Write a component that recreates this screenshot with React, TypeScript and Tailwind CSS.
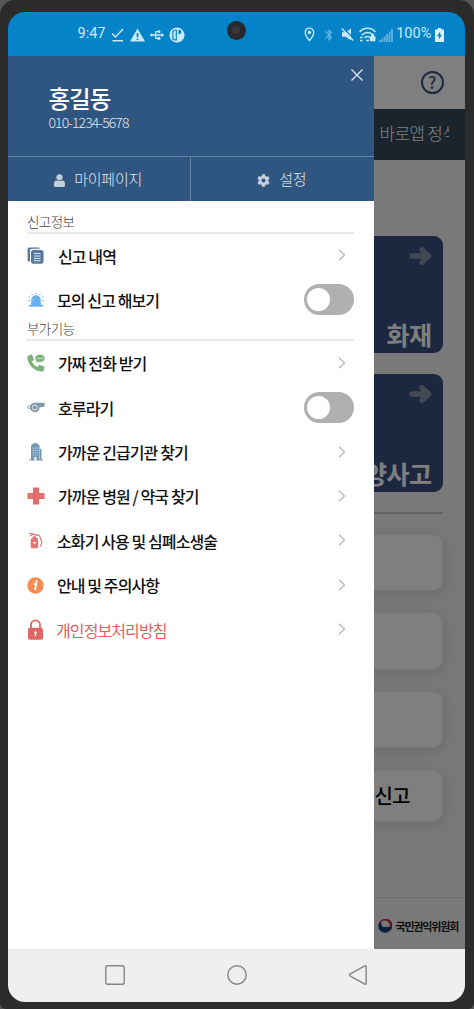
import React, { useState } from 'react';
import { FaCog } from 'react-icons/fa';
import { MdBluetooth, MdOutlineLocationOn, MdUsb } from 'react-icons/md';

const FONT = "font-['Noto_Sans_CJK_KR','Noto_Sans',sans-serif]";

/* ---------- status bar ---------- */

function StatusBar() {
  return (
    <div className="relative h-11 shrink-0 bg-[#0483c8] text-[#cde8f7] flex items-center justify-between pl-[70px] pr-[20.5px] pt-px font-[Roboto,sans-serif]">
      <div className="flex items-center">
        <span className="w-[28px] text-[14.5px] leading-none">9:47</span>
        <svg className="ml-[5px] w-[13px] h-[14px]" viewBox="0 0 13 14" fill="none" stroke="currentColor" strokeWidth="1.5">
          <path d="M1 5.5 4.5 9 12 1M1.5 12.8h10.5" />
        </svg>
        <svg className="ml-[6px] w-[15px] h-[14px]" viewBox="0 0 15 14">
          <path d="M7.5.5 15 13.500H0z" fill="currentColor" />
          <path d="M7.500 5v4.300M7.500 10.400v1.700" stroke="#0483c8" strokeWidth="1.700" />
        </svg>
        <MdUsb className="ml-[4px] size-[16px] rotate-90" />
        <svg className="ml-[4px] size-[16px]" viewBox="0 0 16 16">
          <circle cx="8" cy="8" r="7.6" fill="currentColor" />
          <path d="M7.300 3H6a2.200 2.200 0 0 0-2.200 2.200v5.600A2 2 0 0 0 6 12.800h1.300z" fill="none" stroke="#0483c8" strokeWidth="1.200" />
          <path d="M9.500 2.800h.8a2.100 2.100 0 0 1 0 4.200h-.8z" fill="#0483c8" />
        </svg>
      </div>

      {/* Camera */}
      <div className="absolute left-[219.500px] top-[9px] size-[18.500px] rounded-full bg-[#272a2c] flex items-center justify-center">
        <div className="size-[8px] rounded-full bg-[#3a3a3a]" />
      </div>

      <div className="flex items-center">
        <MdOutlineLocationOn className="size-[17px]" />
        <MdBluetooth className="ml-[4px] size-[14px] opacity-50" />
        <svg className="ml-[5px] size-[13px]" viewBox="0 0 13 13">
          <path d="M1 4.300h3.500L10 .5v11.700L4.500 8.700H1z" fill="currentColor" />
          <path d="M2-.3 13 11" stroke="#0483c8" strokeWidth="1.300" />
          <path d="M.8.600 12.300 12.500" stroke="currentColor" strokeWidth="1.400" />
        </svg>
        <svg className="ml-[5px] w-[17px] h-[15px]" viewBox="0 0 17 15" fill="none" stroke="currentColor" strokeWidth="1.600">
          <path d="M.6 5C4.800 0 12.200 0 16.400 5M3 8.200c3-3.600 8-3.600 11 0M5.500 11c1.700-2 4.300-2 6 0" />
          <path d="M1 10.500h2.500M1 13.500h2.500M7 13.500h3" />
          <path d="M11 9.500h5.500v4.800H11zM12.200 9.500V8a1.500 1.500 0 0 1 3 0v1.500z" fill="currentColor" stroke="none" />
        </svg>
        <svg className="ml-[3px] w-[14px] h-[14px] opacity-50" viewBox="0 0 14 14" stroke="currentColor" strokeWidth="1.700">
          <path d="M.8 14v-2M3.200 14v-3.500M5.600 14V8.500M8 14V6M10.500 14V3.500M13 14V1" />
        </svg>
        <span className="ml-[3.500px] w-[35px] text-[14.5px] leading-none">100%</span>
        <svg className="ml-[4px] w-[9px] h-[14px]" viewBox="0 0 9 14">
          <path d="M2.700 0h3.600v1.400H9V14H0V1.400h2.700z" fill="#e0f1fa" />
          <path d="M5.200 3.500 2 8.200h2v3.200l3-4.700H5.200z" fill="#0483c8" />
        </svg>
      </div>
    </div>
  );
}

/* ---------- menu icons ---------- */

const DocsIcon = () => (
  <svg className="size-[17px]" viewBox="0 0 17 17">
    <path d="M1.500 14.500A1.500 1.500 0 0 1 .6 13V2.200C.6 1 1.300.5 2.300.5H11c1 0 1.700.5 1.700 1.300H5C3.500 1.800 3 2.500 3 3.800v10.700z" fill="#5878a0" />
    <rect x="4" y="3" width="12.500" height="13.800" rx="2.200" fill="#5878a0" />
    <path d="M7 6.500h6.500M7 9h6.500M7 11.400h6.500M7 13.700h6.500" stroke="#dfe7f0" strokeWidth="1" />
  </svg>
);

const SirenIcon = () => (
  <svg className="w-[16px] h-[14px]" viewBox="0 0 16 14">
    <path d="M3.200 12V7.100a4.800 4.800 0 0 1 9.600 0V12z" fill="#67aeee" />
    <path d="M1 11.800h14v1.900H1z" fill="#67aeee" />
    <path d="M8 0v1.700M3.700.8l.8 1.300M12.300.8l-.8 1.300M.6 3.700l1.500.8M15.400 3.700l-1.500.8M0 7.500h1.800M16 7.500h-1.800" stroke="#67aeee" strokeWidth="1" />
    <path d="M5 9.500V7.200c0-1 .5-1.900 1.500-2.400" stroke="#a9d2f7" strokeWidth=".7" fill="none" />
  </svg>
);

const CallIcon = () => (
  <svg className="size-[18px]" viewBox="0 0 18 18">
    <path d="M1 1.800 3.800.6c.6-.2 1.200 0 1.400.6l1.600 3.700c.2.600 0 1.100-.4 1.500L5 7.600c1 2.400 2.900 4.300 5.300 5.300l1.300-1.500c.4-.4.900-.6 1.500-.4l3.700 1.600c.6.200.8.800.7 1.400l-.8 2.700c-.2.600-.7.900-1.300.9C7.400 17.600.4 10.700.4 3c0-.5.200-1 .6-1.200z" fill="#7eb27c" />
    <path d="M13 .4c2.700 0 4.700 1.700 4.700 3.900S15.700 8.200 13 8.200c-.8 0-1.500-.1-2.100-.4l-2 .7.600-1.800a3.600 3.600 0 0 1-1.200-2.400C8.300 2.100 10.400.4 13 .4z" fill="#7eb27c" />
    <path d="M10.300 3.800h1.300v1.200h-1.300zM12.400 3.800h1.300v1.200h-1.300zM14.500 3.800h1.300v1.200h-1.300z" fill="#e4f0e3" />
  </svg>
);

const WhistleIcon = () => (
  <svg className="w-[18px] h-[11px]" viewBox="0 0 18 11">
    <path d="M8 .8h9.600v3.700l-5 .9c-.2 2.800-2.200 4.800-4.800 4.800A4.700 4.700 0 0 1 3 5.500C3 2.800 5.200.8 8 .8z" fill="#8098a8" />
    <circle cx="7.800" cy="5.500" r="2.500" fill="none" stroke="#e5ebef" strokeWidth="1" />
    <path d="M3.800 4.200C2 3.500.6 4 .6 5.100s1.200 1.600 3 1.200" fill="none" stroke="#8098a8" strokeWidth="1" />
  </svg>
);

const BuildingIcon = () => (
  <svg className="w-[14px] h-[18px]" viewBox="0 0 14 18">
    <path d="M2 16.500V2.300L4 1V.3h4.500V1l2 1.300v3.200l2 1v10h1.500v1H.2v-1z" fill="#7295b2" />
    <path d="M4.300 4.500v8M6.300 4.500v8M8.300 4.500v8" stroke="#eef3f7" strokeWidth=".9" strokeDasharray="1.100 1.300" />
    <path d="M5.300 14h2.200v3.500H5.300zM10.200 5.500h.5v11h-.5z" fill="#eef3f7" />
  </svg>
);

const CrossIcon = () => (
  <svg className="size-[18px]" viewBox="0 0 18 18">
    <path d="M6.500.5h5c.4 0 .6.200.6.600v4.800h4.800c.4 0 .6.200.6.600v5c0 .4-.2.600-.6.600h-4.800v4.800c0 .4-.2.600-.6.600h-5c-.4 0-.6-.2-.6-.6v-4.800H1.100c-.4 0-.6-.2-.6-.6v-5c0-.4.200-.6.600-.6h4.800V1.100c0-.4.200-.6.600-.6z" fill="#e46e6e" />
  </svg>
);

const ExtinguisherIcon = () => (
  <svg className="w-[14px] h-[17px]" viewBox="0 0 14 17">
    <path d="M1.800 15.300V8.200c0-1.400.8-2.200 2-2.500V4.300h3.400v1.400c1.200.3 2 1.100 2 2.500v7.100c0 .5-.3.900-.9.900H2.700c-.6 0-.9-.4-.9-.9z" fill="#e57373" />
    <path d="M.3 1.200 8 3.300M1 4l4-2.300M6.500 3.700C9.500 2 11 3.500 11.300 6c.2 2 1.800 3.200 1.500 5.200-.2 1.400-.8 2.300-1.800 3.200" fill="none" stroke="#e57373" strokeWidth="1.200" />
    <path d="M5.500 12.300c-2-1.300-1.800-3 0-2.400 1.800-.6 2 1.100 0 2.400z" fill="#fbe3e3" />
  </svg>
);

const InfoIcon = () => (
  <svg className="size-[17px]" viewBox="0 0 17 17">
    <circle cx="8.500" cy="8.500" r="8.200" fill="#f68b54" />
    <circle cx="9.500" cy="4.500" r="1.200" fill="#fff" />
    <path d="M6.800 7.200h2.500l-1.200 4.700c-.1.500.4.500 1.200.2" fill="none" stroke="#fff" strokeWidth="1.700" />
  </svg>
);

const LockIcon = () => (
  <svg className="w-[15px] h-[21px]" viewBox="0 0 15 21">
    <path d="M3 10V5.800a4.500 4.500 0 0 1 9 0V10" fill="none" stroke="#e06666" strokeWidth="1.800" />
    <rect x="0" y="8.800" width="15" height="11.900" rx="1.800" fill="#e06666" />
    <path d="M7.500 12.200a1.300 1.300 0 0 1 .7 2.400v2.300H6.800v-2.300a1.300 1.300 0 0 1 .7-2.400z" fill="#fff" />
  </svg>
);

/* ---------- drawer ---------- */

interface MenuItem {
  label: string;
  icon: React.ReactNode;
  toggle?: boolean;
  className?: string;
}

const reportItems: MenuItem[] = [
  { label: '신고 내역', icon: <DocsIcon /> },
  { label: '모의 신고 해보기', icon: <SirenIcon />, toggle: true, className: '-ml-px' },
];

const extraItems: MenuItem[] = [
  { label: '가짜 전화 받기', icon: <CallIcon /> },
  { label: '호루라기', icon: <WhistleIcon />, toggle: true },
  { label: '가까운 긴급기관 찾기', icon: <BuildingIcon /> },
  { label: '가까운 병원 / 약국 찾기', icon: <CrossIcon /> },
  { label: '소화기 사용 및 심폐소생술', icon: <ExtinguisherIcon />, className: '-ml-px' },
  { label: '안내 및 주의사항', icon: <InfoIcon />, className: '-ml-px' },
  { label: '개인정보처리방침', icon: <LockIcon />, className: '-ml-[2px] text-[#e06060] font-normal' },
];

function Toggle() {
  const [on, setOn] = useState(false);
  return (
    <button
      onClick={() => setOn(!on)}
      className={`w-[50px] h-[31px] rounded-full px-[3px] flex items-center ${on ? 'bg-[#2f5680] justify-end' : 'bg-[#b0b0b0]'}`}
    >
      <span className="size-[23px] rounded-full bg-white" />
    </button>
  );
}

function MenuRow({ item }: { item: MenuItem }) {
  return (
    <div className="h-[44.4px] flex items-center">
      <div className="w-[17px] mr-[14px] flex justify-center shrink-0">
        <div className="shrink-0">{item.icon}</div>
      </div>
      <span className={`text-[16px] leading-none tracking-[-0.900px] whitespace-nowrap ${item.className?.includes('text-') ? '' : 'text-[#111] font-medium'} ${item.className ?? ''}`}>
        {item.label}
      </span>
      <div className="ml-auto pb-px">
        {item.toggle ? (
          <Toggle />
        ) : (
          <svg className="w-[8px] h-[12px] mr-[8px]" viewBox="0 0 8 12" fill="none" stroke="#b8b8b8" strokeWidth="1.300">
            <path d="M1 .8 6.500 6 1 11.200" />
          </svg>
        )}
      </div>
    </div>
  );
}

function SectionLabel({ children }: { children: React.ReactNode }) {
  return (
    <div className="h-[22px] border-b-2 border-[#e8e8e8] text-[13.5px] leading-[18px] tracking-[-0.600px] font-light text-[#444]">
      {children}
    </div>
  );
}

function Drawer() {
  return (
    <div className="absolute left-0 inset-y-0 w-[366.500px] bg-white flex flex-col">
      <div className="bg-[#2f5680] text-white">
        <div className="h-[100px] pl-[41px] pr-[11px] flex justify-between">
          <div className="pt-[30px]">
            <div className="text-[23.5px] leading-[24px] tracking-[-1px] font-medium">홍길동</div>
            <div className="mt-[3px] text-[14px] leading-[18px] tracking-[-0.900px] font-light text-[#e2e8ef]">010-1234-5678</div>
          </div>
          <svg className="mt-[13px] size-[12px]" viewBox="0 0 12 12" stroke="#dfe6ee" strokeWidth="1.300">
            <path d="m.5.5 11 11M11.500.5l-11 11" />
          </svg>
        </div>
        <div className="h-[45.300px] grid grid-cols-2 border-t border-[#6582a2] text-[15px] tracking-[-0.250px] font-light text-[#e2e8ef]">
          <div className="pr-[1px] flex items-center justify-center border-r border-[#6582a2]">
            <svg className="w-[11px] h-[13px] mr-[9px] mt-[3px]" viewBox="0 0 11 13" fill="#c3cfdd">
              <circle cx="5.500" cy="3.300" r="3.100" />
              <path d="M2.300 6.200c1.800 1.200 4.600 1.200 6.400 0 1.500.5 2.300 1.700 2.300 3.500v1.800c0 .9-.5 1.500-1.500 1.500h-8C.5 13 0 12.400 0 11.500V9.700c0-1.800.8-3 2.300-3.500z" />
            </svg>
            마이페이지
          </div>
          <div className="pr-[1px] flex items-center justify-center">
            <FaCog className="size-[13px] mr-[9px] mt-[3px] text-[#c3cfdd]" />
            설정
          </div>
        </div>
      </div>

      <div className="pl-[19.500px] pr-[20px] pt-[10.500px]">
        <SectionLabel>신고정보</SectionLabel>
        {reportItems.map(item => (
          <MenuRow key={item.label} item={item} />
        ))}
        <div className="-mt-[3.500px]">
          <SectionLabel>부가기능</SectionLabel>
        </div>
        {extraItems.map(item => (
          <MenuRow key={item.label} item={item} />
        ))}
      </div>
    </div>
  );
}

/* ---------- home screen behind the drawer ---------- */

function ReportCard({ title }: { title?: string }) {
  return (
    <div className="h-[117.700px] rounded-[9px] bg-[#3a5180] pt-[10px] pr-[11px] pb-[4px] flex flex-col items-end justify-between">
      <svg className="w-[23px] h-[20px]" viewBox="0 0 23 20" fill="none" stroke="#8792a8" strokeWidth="5.500" strokeLinecap="round" strokeLinejoin="round">
        <path d="M3 10h16M13 3.800 19.500 10 13 16.200" />
      </svg>
      {title && <span className="text-[25px] leading-[30px] tracking-[-0.400px] font-bold text-white">{title}</span>}
    </div>
  );
}

function HomeScreen() {
  return (
    <div className="h-full flex flex-col bg-[#f2f2f2]">
      <div className="h-[52.500px] bg-white flex items-center justify-end pr-[21px]">
        <div className="size-[23px] rounded-full border-2 border-[#3a5180] text-[#3a5180] text-[17px] leading-none font-medium flex items-center justify-center pb-px">
          ?
        </div>
      </div>
      <div className="h-[51.200px] bg-[#344859] pl-[339px] pr-[15.500px] pb-[3px] flex items-center">
        <div className="w-full overflow-hidden whitespace-nowrap text-[17px] leading-[24px] tracking-[-0.700px] font-light text-white">
          <span className="-ml-[2px] mr-[2px]">신고</span> 바로앱 정식
        </div>
      </div>

      <div className="mt-[76px] pl-[15px] pr-[22px] flex flex-col">
        <div className="grid grid-cols-2 gap-x-3 gap-y-[20.500px]">
          <ReportCard />
          <ReportCard title="화재" />
          <ReportCard />
          <ReportCard title="해양사고" />
        </div>
        <div className="mt-[20.500px] h-[2px] bg-[#c4c4c4]" />
        <div className="mt-[19.500px] flex flex-col gap-[21.600px]">
          {[0, 1, 2].map(i => (
            <div key={i} className="h-[57.200px] rounded-[10px] bg-white border border-[#ececec] shadow-[2px_3px_14px_rgba(0,0,0,0.12)]" />
          ))}
          <div className="h-[52.500px] rounded-[10px] bg-white border border-[#ececec] shadow-[2px_3px_14px_rgba(0,0,0,0.12)] flex items-center justify-end pr-[32px] text-[20px] tracking-[-0.800px] font-medium text-black">
            문자 신고
          </div>
        </div>
      </div>

      <div className="mt-auto h-[51.500px] border-t border-[#dcdcdc] flex items-center justify-end gap-[3px] pt-[6px] pr-[6.500px]">
        <svg className="size-[14px]" viewBox="0 0 14 14">
          <circle cx="7" cy="7" r="6.800" fill="#0c4478" />
          <path d="M1.800 3A6.800 6.800 0 1 1 11.500 12.100c1.800-2.500 1.500-5.600-.5-7.100-2.500-1.500-4 0-5 1S2.500 6.500 1.800 3z" fill="#cf2340" />
          <path d="M3.500 2.500C6 .9 9.200 1.500 11 3.800c1 1.500 1.300 3.500 0 4.200-1.300.6-2.300-.6-3.900 0C5 8.800 2.500 6 3.500 2.500z" fill="#f2f2f2" />
        </svg>
        <span className="text-[11px] tracking-[-1.150px] font-bold text-[#222]">국민권익위원회</span>
      </div>
    </div>
  );
}

function NavBar() {
  return (
    <div className="h-[53.500px] shrink-0 bg-[#efefef] pl-[97px] pr-[98px] flex items-center justify-between">
      <svg className="size-[20px]" viewBox="0 0 20 20" fill="none" stroke="#858585" strokeWidth="1.400">
        <rect x=".8" y=".8" width="18.400" height="18.400" rx="1.800" />
      </svg>
      <svg className="size-[20px]" viewBox="0 0 20 20" fill="none" stroke="#858585" strokeWidth="1.400">
        <circle cx="10" cy="10" r="9.200" />
      </svg>
      <svg className="w-[18px] h-[20px]" viewBox="0 0 18 20" fill="none" stroke="#858585" strokeWidth="1.400" strokeLinejoin="round">
        <path d="M15.800.9 1.300 8.900c-.9.500-.9 1.700 0 2.200l14.500 8c.8.400 1.400 0 1.400-.9V1.800c0-.9-.6-1.300-1.400-.9z" />
      </svg>
    </div>
  );
}

export default function App() {
  return (
    <div className="w-[474px] h-[1009px] bg-[#555] overflow-hidden">
      <div className={`h-full bg-[#2b2b2b] rounded-t-[15px] rounded-b-[6px] pt-3 pb-[7px] pl-[7.500px] pr-[9.300px] ${FONT}`}>
        <div className="h-full rounded-[17px] overflow-hidden flex flex-col">
          <StatusBar />
          <div className="relative flex-1 min-h-0 overflow-hidden">
            <HomeScreen />
            <div className="absolute inset-0 bg-black/50" />
            <Drawer />
          </div>
          <NavBar />
        </div>
      </div>
    </div>
  );
}
